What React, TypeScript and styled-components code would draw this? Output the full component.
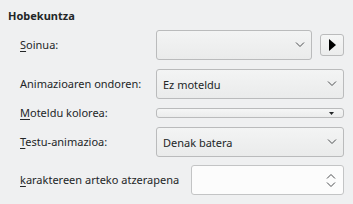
import { FC, ReactNode } from "react";
import styled, { createGlobalStyle } from "styled-components";

const GlobalStyle = createGlobalStyle`
	html, body {
		margin: 0;
		padding: 0;
		background: #eff0f1;
	}
	body {
		font-family: "Noto Sans", "DejaVu Sans", sans-serif;
		font-size: 11px;
		color: #232627;
	}
`;

const Page = styled.div`
	width: 353px;
	height: 204px;
	box-sizing: border-box;
	padding: 9px 9px 0 8px;
	background: #eff0f1;
`;

const Title = styled.div`
	font-weight: 700;
	font-size: 11px;
	line-height: 14px;
	margin-bottom: 7px;
`;

const Form = styled.div`
	display: grid;
	grid-template-columns: 136px 1fr;
	row-gap: 9px;
	padding-left: 12px;
	align-items: center;
`;

const Label = styled.div`
	line-height: 10px;
	white-space: nowrap;
`;

const Key = styled.span`
	text-decoration: underline;
	text-underline-offset: 2px;
`;

const FieldRow = styled.div`
	display: flex;
	align-items: center;
	gap: 8px;
`;

const Combo = styled.div`
	flex: 1;
	height: 30px;
	box-sizing: border-box;
	border: 1px solid #babbbc;
	border-radius: 3px;
	background: linear-gradient(#f3f4f4, #eaebeb);
	display: flex;
	align-items: center;
	justify-content: space-between;
	padding: 0 6px;
	font-size: 11px;
`;

const PlayButton = styled.div`
	width: 24px;
	height: 22px;
	box-sizing: border-box;
	border: 1px solid #babbbc;
	border-radius: 3px;
	background: linear-gradient(#f5f6f6, #ebecec);
	display: flex;
	align-items: center;
	justify-content: center;
`;

const ColorBar = styled.div`
	height: 10px;
	box-sizing: border-box;
	border: 1px solid #babbbc;
	border-radius: 3px;
	background: linear-gradient(#f5f6f6, #ebecec);
	display: flex;
	align-items: center;
	justify-content: flex-end;
	padding-right: 9px;
`;

const DelayRow = styled.div`
	display: flex;
	align-items: center;
	gap: 12px;
	padding-left: 12px;
	margin-top: 8px;
`;

const SpinBox = styled.div`
	flex: 1;
	height: 30px;
	box-sizing: border-box;
	border: 1px solid #c3c4c5;
	border-radius: 3px;
	background: #fcfcfc;
	display: flex;
	align-items: center;
	justify-content: flex-end;
	padding-right: 7px;
`;

const Chevron: FC<{ up?: boolean }> = ({ up }) => (
	<svg width="10" height="6" viewBox="0 0 10 6">
		<path
			d={up ? "M1 5.5 L5 1.5 L9 5.5" : "M1 0.5 L5 4.5 L9 0.5"}
			fill="none"
			stroke="#4d4f50"
			strokeWidth="1"
		/>
	</svg>
);

const SpinArrows = styled.div`
	display: flex;
	flex-direction: column;
	gap: 3px;
`;

const ComboBox: FC<{ children?: ReactNode }> = ({ children }) => (
	<Combo>
		<span>{children}</span>
		<Chevron />
	</Combo>
);

export default function App() {
	return (
		<Page>
			<GlobalStyle />
			<Title>Hobekuntza</Title>
			<Form>
				<Label>
					<Key>S</Key>oinua:
				</Label>
				<FieldRow>
					<ComboBox />
					<PlayButton>
						<svg width="8" height="12" viewBox="0 0 8 12">
							<path d="M1 0 L8 6 L1 12 Z" fill="#000" />
						</svg>
					</PlayButton>
				</FieldRow>

				<Label>Animazioaren ondoren:</Label>
				<ComboBox>Ez moteldu</ComboBox>

				<Label>
					<Key>M</Key>oteldu kolorea:
				</Label>
				<ColorBar>
					<svg width="5" height="3" viewBox="0 0 5 3">
						<path d="M0 0 L5 0 L2.5 3 Z" fill="#232627" />
					</svg>
				</ColorBar>

				<Label>
					<Key>T</Key>estu-animazioa:
				</Label>
				<ComboBox>Denak batera</ComboBox>
			</Form>
			<DelayRow>
				<Label>
					<Key>k</Key>araktereen arteko atzerapena
				</Label>
				<SpinBox>
					<SpinArrows>
						<Chevron up />
						<Chevron />
					</SpinArrows>
				</SpinBox>
			</DelayRow>
		</Page>
	);
}
